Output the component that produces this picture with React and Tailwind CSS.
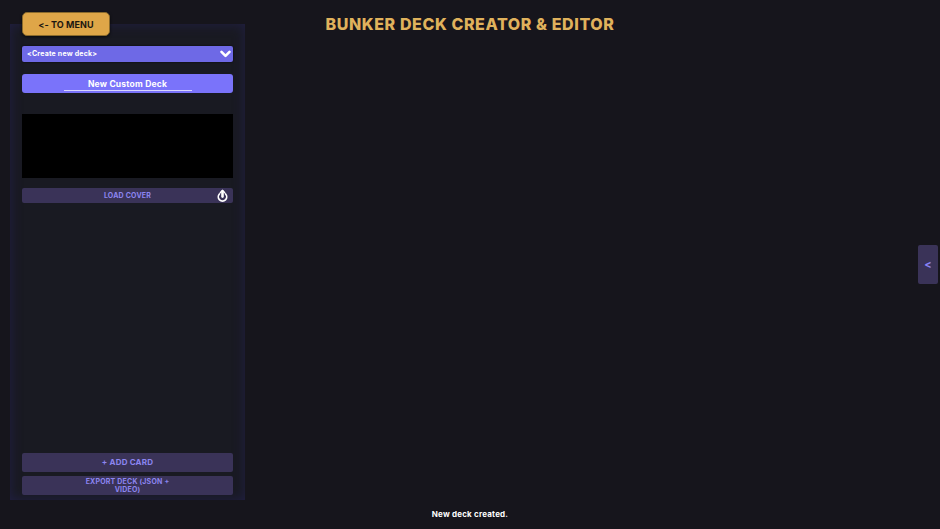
import React from 'react';

const font = "font-['Inter','Liberation_Sans',sans-serif]";

const App = () => {
  return (
    <div className={`flex h-[529px] w-full flex-col overflow-hidden bg-[#16151c] ${font}`}>
      <header className="relative flex h-[24px] shrink-0 justify-center">
        <button type="button" className="absolute left-[22px] top-[12px] z-10 h-[24px] w-[88px] rounded-[5px] border border-[#8a6a2c] bg-[#dfa648] pt-px text-[9px] font-bold tracking-[0.1px] text-[#1c1710] shadow-[0_1px_3px_rgba(0,0,0,0.7)]">
          {'<- TO MENU'}
        </button>
        <h1 className="mt-[14px] h-[20px] whitespace-nowrap text-[16px] font-extrabold leading-[20px] tracking-[0.6px] text-[#e0b25c]">
          BUNKER DECK CREATOR &amp; EDITOR
        </h1>
      </header>

      <div className="flex h-[476px] shrink-0 items-center justify-between pl-[10px] pr-[2px]">
        <aside className="flex h-full w-[235px] flex-col bg-[#191a22] px-[12px] pb-[5px] pt-[22px] shadow-[inset_0_0_12px_rgba(34,32,70,0.95)]">
          <div className="flex h-[16px] items-center justify-between rounded-[2px] bg-[#6e69e6] pl-[5px] pr-[2px] shadow-[0_0_2px_rgba(0,0,0,0.8)]">
            <span className="text-[7px] font-bold tracking-[0.2px] text-white">{'<Create new deck>'}</span>
            <svg width="11" height="8" viewBox="0 0 11 8" fill="none">
              <path d="M1.5 1.8 5.5 5.8 9.5 1.8" stroke="#fff" strokeWidth="2.6" strokeLinecap="round" strokeLinejoin="round" />
            </svg>
          </div>

          <div className="mt-[12px] flex h-[19px] justify-center rounded-[3px] bg-[#7a73fa]">
            <span className="h-[17px] w-[128px] border-b border-[#d9d6ff] text-center text-[8.5px] font-bold leading-[20px] tracking-[0.2px] text-white">
              New Custom Deck
            </span>
          </div>

          <div className="mt-[21px] h-[64px] bg-black" />

          <div className="relative mt-[10px] flex h-[15px] items-center justify-center rounded-[2px] bg-[#3a3358] pt-px text-[7px] font-bold tracking-[0.2px] text-[#8c85f0]">
            LOAD COVER
            <svg className="absolute right-[4px] top-[1px]" width="13" height="13" viewBox="0 0 13 13" fill="none">
              <path d="M3.4 5a4.2 4.2 0 1 0 6.2 0" stroke="#fff" strokeWidth="1.7" strokeLinecap="round" />
              <path d="M6.5 7.6V2.4" stroke="#fff" strokeWidth="2.6" strokeLinecap="round" />
              <path d="M4.4 3.6l2.1-2.2 2.1 2.2" stroke="#fff" strokeWidth="1.5" strokeLinecap="round" strokeLinejoin="round" />
            </svg>
          </div>

          <div className="flex-1" />

          <button type="button" className="h-[19px] rounded-[2px] bg-[#3a3358] pb-px text-[8px] font-bold tracking-[0.2px] text-[#8c85f0]">
            + ADD CARD
          </button>
          <button type="button" className="mt-[4px] h-[19px] rounded-[2px] bg-[#3a3358] px-[60px] text-[7px] font-bold leading-[8px] tracking-[0.2px] text-[#8c85f0]">
            EXPORT DECK (JSON + VIDEO)
          </button>
        </aside>

        <button type="button" className="mt-[5px] flex h-[39px] w-[20px] items-center justify-center rounded-[2px] bg-[#3a3358] text-[11px] font-bold text-[#8a84f5]">
          {'<'}
        </button>
      </div>

      <footer className="flex h-[29px] items-start justify-center pt-[9px] text-[8px] font-bold leading-[11px] tracking-[0.2px] text-white">
        New deck created.
      </footer>
    </div>
  );
};

export default App;
